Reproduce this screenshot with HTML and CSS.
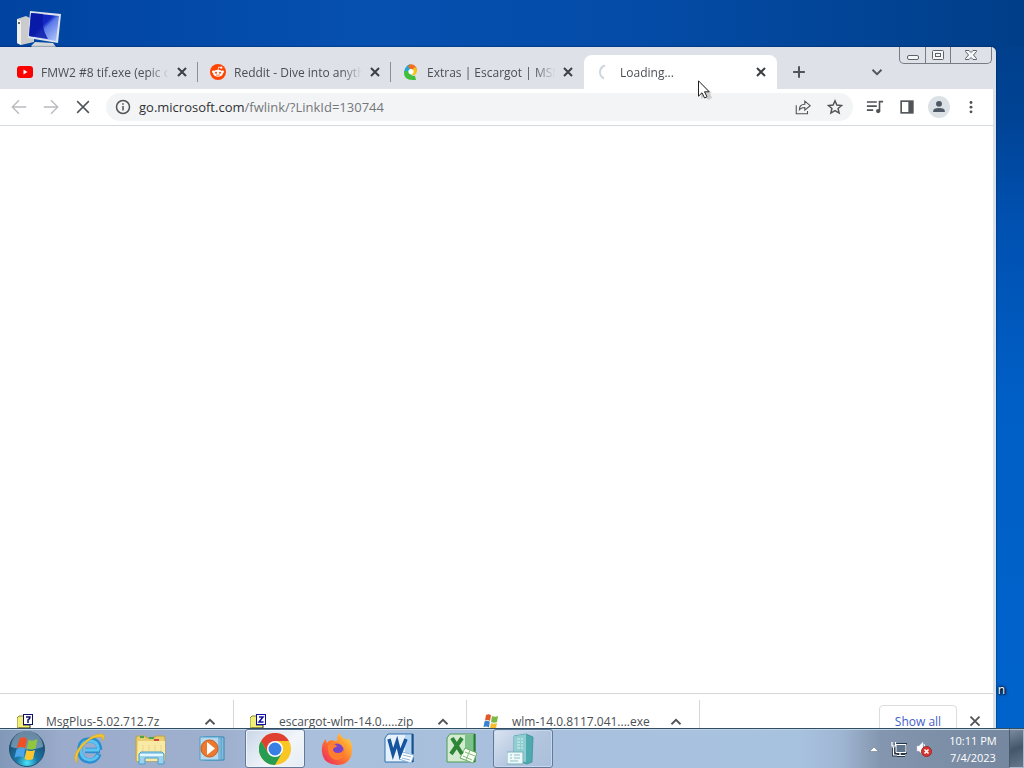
FILE: index.html
```html
<!DOCTYPE html>
<html lang="en">
  <head>
    <meta charset="utf-8">
    <title>Desktop</title>
    <link rel="stylesheet" href="styles.css">
  </head>
  <body>
    <main class="desktop">
      <svg class="computer-icon" viewBox="0 0 46 37" aria-label="Computer">
        <defs>
          <linearGradient id="screen" x1="0" y1="0" x2="1" y2="1">
            <stop offset="0" stop-color="#0a1fae"/>
            <stop offset=".45" stop-color="#1428c4"/>
            <stop offset=".55" stop-color="#5d7bea"/>
            <stop offset="1" stop-color="#b9cdfa"/>
          </linearGradient>
        </defs>
        <path d="M1 8l9-3 8 4v22l-13 3-4-2z" fill="#c9cbcd"/>
        <path d="M1 8l4 2v24l-4-2z" fill="#eeeeec"/>
        <circle cx="3" cy="12" r="1" fill="#333"/>
        <path d="M19 31l18 1 3 4-6 1H17l-2-2z" fill="#d5d9dc"/>
        <path d="M14 0l31 3-3 29-30-5z" fill="#dce4ee"/>
        <path d="M15 2l28 3-3 25-27-5z" fill="url(#screen)"/>
        <path d="M15 2l12 1q-2 14 5 25l-19-3z" fill="#0718a4" opacity=".8"/>
      </svg>
      <span class="icon-label">n</span>

      <section class="window">
        <header class="tabstrip">
          <div class="tab">
            <svg class="favicon" viewBox="0 0 16 16"><rect x="0" y="2" width="16" height="12" rx="3" fill="#f00"/><path d="M6.500 5.500v5l4-2.500z" fill="#fff"/></svg>
            <span class="tab-title">FMW2 #8 tif.exe (epic de</span>
            <button class="tab-close" aria-label="Close tab"><svg viewBox="0 0 16 16"><path d="M4 4l8 8M12 4l-8 8"/></svg></button>
          </div>
          <div class="tab">
            <svg class="favicon" viewBox="0 0 16 16"><circle cx="8" cy="8" r="8" fill="#ff4500"/><ellipse cx="8" cy="9.300" rx="5" ry="3.500" fill="#fff"/><circle cx="3.300" cy="7.800" r="1.300" fill="#fff"/><circle cx="12.700" cy="7.800" r="1.300" fill="#fff"/><circle cx="11.300" cy="3.700" r="1.100" fill="#fff"/><path d="M8 6l.7-3 2.600.7" stroke="#fff" fill="none" stroke-width=".7"/><circle cx="6" cy="8.700" r="1" fill="#ff4500"/><circle cx="10" cy="8.700" r="1" fill="#ff4500"/><path d="M6 10.800q2 1.200 4 0" stroke="#ff4500" fill="none" stroke-width=".7"/></svg>
            <span class="tab-title">Reddit - Dive into anyth</span>
            <button class="tab-close" aria-label="Close tab"><svg viewBox="0 0 16 16"><path d="M4 4l8 8M12 4l-8 8"/></svg></button>
          </div>
          <div class="tab">
            <svg class="favicon" viewBox="0 0 16 16"><path d="M7 0Q2 2 1 8l5 1q-1-3 2-4z" fill="#25a7d8"/><path d="M5 2q2-3 6-1 3 2 3 6l-3 2-1-3-3-1z" fill="#f36c21"/><path d="M14 6q0 6-5 5l1-3V5l2-2z" fill="#f6c514"/><path d="M1 7q-1 9 9 9h3l-1-4q-5 0-7-5z" fill="#3fbf3a"/><circle cx="8" cy="7.500" r="2.600" fill="#fff"/></svg>
            <span class="tab-title">Extras | Escargot | MSN M</span>
            <button class="tab-close" aria-label="Close tab"><svg viewBox="0 0 16 16"><path d="M4 4l8 8M12 4l-8 8"/></svg></button>
          </div>
          <div class="tab active">
            <svg class="favicon" viewBox="0 0 16 16"><path d="M9 1.500A7 7 0 0 0 8 14.500" fill="none" stroke="#cdd5df" stroke-width="2"/></svg>
            <span class="tab-title">Loading...</span>
            <button class="tab-close" aria-label="Close tab"><svg viewBox="0 0 16 16"><path d="M4 4l8 8M12 4l-8 8"/></svg></button>
          </div>
          <button class="icon-button new-tab" aria-label="New tab"><svg viewBox="0 0 20 20"><path d="M10 3.500v13M3.500 10h13" stroke-width="2.200"/></svg></button>
          <button class="icon-button tab-search" aria-label="Search tabs"><svg viewBox="0 0 20 20"><path d="M5 7.500l5 5 5-5" stroke-width="2"/></svg></button>
          <div class="window-controls">
            <button aria-label="Minimize"><svg viewBox="0 0 24 16"><rect x="6.500" y="8.500" width="11" height="4" rx="1.500"/></svg></button>
            <button aria-label="Maximize"><svg viewBox="0 0 24 16"><rect x="6.500" y="3.500" width="11" height="9" rx="1"/><rect x="9.500" y="6.500" width="5" height="3"/></svg></button>
            <button class="close-window" aria-label="Close"><svg viewBox="0 0 24 16"><path d="M6.500 3.500h3.500L12 5.500l2-2h3.500v1L14.500 8l3 3.500v1H14l-2-2-2 2H6.500v-1l3-3.500-3-3.500z"/></svg></button>
          </div>
        </header>

        <nav class="toolbar">
          <button class="icon-button disabled" aria-label="Back"><svg viewBox="0 0 20 20"><path d="M18 10H3M10 2.500L2.500 10l7.500 7.500"/></svg></button>
          <button class="icon-button disabled" aria-label="Forward"><svg viewBox="0 0 20 20"><path d="M2 10h15M10 2.500l7.500 7.500-7.500 7.500"/></svg></button>
          <button class="icon-button" aria-label="Stop"><svg viewBox="0 0 20 20"><path d="M3.500 3.500l13 13M16.500 3.500l-13 13" stroke-width="1.700"/></svg></button>
          <div class="omnibox">
            <svg class="info" viewBox="0 0 16 16"><circle cx="8" cy="8" r="6.500"/><path d="M8 7v4.500M8 4.300v1.500"/></svg>
            <a class="address" href="#"><span class="domain">go.microsoft.com</span>/fwlink/?LinkId=130744</a>
            <button class="icon-button" aria-label="Share"><svg viewBox="0 0 20 20"><path d="M2.500 8v9.500h12.500v-3M6 13q0-6 6-6V3.500l6 5-6 5v-3q-4 0-6 2.500z" stroke-width="1.200"/></svg></button>
            <button class="icon-button" aria-label="Bookmark"><svg viewBox="0 0 20 20"><path d="M10 3l2.100 4.800 5.200.5-3.900 3.400 1.200 5.100-4.600-2.700-4.600 2.700 1.200-5.100L2.700 8.300l5.200-.5z" stroke-width="1.600"/></svg></button>
          </div>
          <button class="icon-button" aria-label="Media"><svg viewBox="0 0 20 20"><path d="M1 4.500h11M1 9h11M1 13.500h7M15 15V4h4" stroke-width="1.800"/><circle cx="13.500" cy="14.500" r="2.400" fill="#505357" stroke="none"/></svg></button>
          <button class="icon-button" aria-label="Side panel"><svg viewBox="0 0 20 20"><rect x="3.500" y="3.500" width="13" height="13" stroke-width="1.800"/><path d="M11.500 3.500h5v13h-5z" fill="#505357" stroke="none"/></svg></button>
          <button class="icon-button profile" aria-label="Profile"><svg viewBox="0 0 20 20"><g fill="#4d5966" stroke="none"><circle cx="10" cy="6.500" r="3.300"/><path d="M3.500 15.500v-1q0-3.500 6.500-3.500t6.500 3.500v1z"/></g></svg></button>
          <button class="icon-button" aria-label="Menu"><svg viewBox="0 0 20 20"><g fill="#505357" stroke="none"><circle cx="10" cy="5" r="1.600"/><circle cx="10" cy="10.200" r="1.600"/><circle cx="10" cy="15.400" r="1.600"/></g></svg></button>
        </nav>

        <div class="page"></div>

        <footer class="downloads">
          <div class="download">
            <svg class="file-icon" viewBox="0 0 16 16"><path d="M0 4l2-2h5v12H0z" fill="#f2ee7a" stroke="#8a8530"/><path d="M2 14h11v-3H6" fill="#f7f36b" stroke="#333"/><rect x="6.500" y=".5" width="9" height="10" fill="#fff" stroke="#101060"/><path d="M9 3h4q0 2-2 3v3" fill="none" stroke="#101070" stroke-width="1.500"/></svg>
            <span class="file-name">MsgPlus-5.02.712.7z</span>
            <button class="icon-button" aria-label="Options"><svg viewBox="0 0 20 20"><path d="M5 12.500l5-5 5 5" stroke-width="2"/></svg></button>
          </div>
          <div class="download">
            <svg class="file-icon" viewBox="0 0 16 16"><path d="M0 4l2-2h5v12H0z" fill="#f2ee7a" stroke="#8a8530"/><path d="M2 14h11v-3H6" fill="#f7f36b" stroke="#333"/><rect x="6.500" y=".5" width="9" height="10" fill="#fff" stroke="#1010a0"/><path d="M9 3h4L9 8h4.500" fill="none" stroke="#1010a0" stroke-width="1.500"/></svg>
            <span class="file-name">escargot-wlm-14.0.....zip</span>
            <button class="icon-button" aria-label="Options"><svg viewBox="0 0 20 20"><path d="M5 12.500l5-5 5 5" stroke-width="2"/></svg></button>
          </div>
          <div class="download">
            <svg class="file-icon" viewBox="0 0 16 16"><path d="M3 1q3-1.500 5 .3L7 7Q5 5.500 2 6.500z" fill="#e2582a"/><path d="M9 2q3 1.500 6 0l-1 6q-3 1.500-6 0z" fill="#78b843"/><path d="M1.500 7.500q3-1.500 5.300.3L6 13.500Q3.500 12 .5 13z" fill="#3b82d0"/><path d="M8 9q3 1.500 6 0l-1 5.500q-3 1.500-6 0z" fill="#f5bd2d"/></svg>
            <span class="file-name">wlm-14.0.8117.041....exe</span>
            <button class="icon-button" aria-label="Options"><svg viewBox="0 0 20 20"><path d="M5 12.500l5-5 5 5" stroke-width="2"/></svg></button>
          </div>
          <button class="show-all">Show all</button>
          <button class="icon-button" aria-label="Close downloads"><svg viewBox="0 0 20 20"><path d="M5 4l10 10M15 4L5 14" stroke-width="2"/></svg></button>
        </footer>
      </section>

      <svg class="cursor" viewBox="0 0 14 20"><path d="M3 3v16l4-3 3 4 4-2-2-5h2z" fill="#888" opacity=".35"/><path d="M.5.800v15.400l3.500-3.400 2.600 5.200 2.400-1.200-2.500-5h4.700z" fill="#fff" stroke="#222"/></svg>
    </main>

    <footer class="taskbar">
      <button class="start" aria-label="Start">
        <svg viewBox="0 0 38 38">
          <defs>
            <radialGradient id="orb" cx=".5" cy=".9" r=".85">
              <stop offset="0" stop-color="#4be4f5"/>
              <stop offset=".35" stop-color="#1b78a8"/>
              <stop offset="1" stop-color="#1c3f63"/>
            </radialGradient>
          </defs>
          <circle cx="19" cy="19" r="17.500" fill="url(#orb)" stroke="#24506d"/>
          <path d="M3 17a16 16 0 0 1 32 0q-16 5-32 0z" fill="#a9c3d4" opacity=".55"/>
          <path d="M12 8q5-2 7 1l-1.500 9q-4-2-9 0z" fill="#ee5126"/>
          <path d="M20.500 10q4 2 9-1l-2 9.500q-4 2-8.500 0z" fill="#8fc63e"/>
          <path d="M8.500 19.500q5-2 8.500 0l-1.500 8q-4-2-9 0z" fill="#4aa6e8"/>
          <path d="M18.500 20q4 2 8.500 0l-2 9q-4 2-8.500 0z" fill="#fdc62e"/>
        </svg>
      </button>
      <button class="task" aria-label="Internet Explorer">
        <svg viewBox="0 0 32 32"><path d="M27 17.500H12M26 21Q23 28 16.500 28 7 27 7 17T17 7q9 0 9.500 10" fill="none" stroke="#2a8ed0" stroke-width="5.500"/><path d="M26 17H12M25 22Q22 27 16.500 27 8 26 8 17T17 8q8 0 8.500 9" fill="none" stroke="#5cc3f2" stroke-width="3"/><path d="M4 30Q-2 24 8 12 20 0 29 1q4 1 1 7 0-5-4-4-8 0-16 9-7 8-6 17z" fill="#f5c62c" stroke="#d7a51c" stroke-width=".5"/></svg>
      </button>
      <button class="task" aria-label="Explorer">
        <svg viewBox="0 0 32 32"><path d="M1 5l1-2h8l2 2 8-1 1-1h8l1 2v23H1z" fill="#e8cd6e" stroke="#c2a13f"/><path d="M3 8h27v20H2z" fill="#f8e9a5"/><path d="M5 4h4M14 5h5" stroke="#49a44a" stroke-width="2"/><path d="M19 7h5" stroke="#d4443b" stroke-width="2"/><path d="M8 12v8M14 12v7M20 12v7M26 12v8" stroke="#eed68a"/><path d="M4 21l2-2h21l2 2v10h-6v-6H10v6H4z" fill="#9bd3ee" stroke="#4b9dca"/><path d="M5 22h23" stroke="#e5f6ff" stroke-width="2"/></svg>
      </button>
      <button class="task" aria-label="Media Player">
        <svg viewBox="0 0 32 32"><path d="M9 4h18v23H9z" fill="#85bde0" stroke="#3685b3"/><path d="M6 4h18v23H6z" fill="#a5d4ee" stroke="#4c94bd"/><path d="M3 4h19v23H3z" fill="#b9d8ec" stroke="#4b9fcb"/><circle cx="12.500" cy="15.500" r="8.500" fill="#ed792e" stroke="#c9591e"/><path d="M10 9v13l8-6.500z" fill="#fff"/></svg>
      </button>
      <button class="task open" aria-label="Chrome">
        <svg viewBox="0 0 32 32"><circle cx="16" cy="16" r="16" fill="#f9c624"/><path d="M16 8L9 20 2.100 8A16 16 0 0 1 29.900 8z" fill="#df4032"/><path d="M2.100 8A16 16 0 0 0 16 32l7-12H9z" fill="#269d50"/><circle cx="16" cy="16" r="8" fill="#fff"/><circle cx="16" cy="16" r="6.500" fill="#377fe5"/></svg>
      </button>
      <button class="task" aria-label="Firefox">
        <svg viewBox="0 0 32 32">
          <defs><linearGradient id="fox" x1="1" y1="0" x2="0" y2="1"><stop offset="0" stop-color="#ffe340"/><stop offset=".5" stop-color="#ff7a2d"/><stop offset="1" stop-color="#eb1d65"/></linearGradient></defs>
          <path d="M18 0q2 4 6 6 3 2 3-1 5 6 4 13Q30 32 16 32 2 31 1 19 0 11 5 6q0 3 1 4 1-2 4-3 4 1 6 1 0-5 2-8z" fill="url(#fox)"/>
          <circle cx="16" cy="17" r="6.500" fill="#7744ca"/><path d="M7 12q5-2 8 0l1 2q-3 0-4 2 0 4 5 4 4 0 5-3 2 1 2 4-3 6-9 6Q6 25 7 12z" fill="#ff7d2f"/>
        </svg>
      </button>
      <button class="task" aria-label="Word">
        <svg viewBox="0 0 32 32"><path d="M5 1h25v28H2V5z" fill="#e7f1fb" stroke="#2c70ad"/><path d="M22 2h7v18h-7z" fill="#b3d3f0"/><path d="M29.500 1v28" stroke="#174f8c" stroke-width="2"/><path d="M19 19l12 3-3 8-12-4z" fill="#fff" stroke="#8bb6df"/><path d="M20 22l8 2M19 25l8 2" stroke="#8fb2d8"/><path d="M6 6l4 15 4-12 3 12 6-15" fill="none" stroke="#17549f" stroke-width="3.500"/></svg>
      </button>
      <button class="task" aria-label="Excel">
        <svg viewBox="0 0 32 32"><path d="M5 1h25v28H2V5z" fill="#d4ebcf" stroke="#4b9956"/><path d="M20 2h9v16h-9z" fill="#7cc08a"/><path d="M29.500 1v28" stroke="#287a39" stroke-width="2"/><path d="M20 15l12 5-4 10-13-5z" fill="#f7fff3" stroke="#6aac67"/><path d="M20 19l10 4M18 23l9 4M25 17l-4 10" stroke="#86bd80"/><path d="M7 5l10 16M17 5L6 21" stroke="#2c8636" stroke-width="4"/></svg>
      </button>
      <button class="task open current" aria-label="Setup">
        <svg viewBox="0 0 32 32"><path d="M7 3l12-2 7 3-1 25-5 2-13-4z" fill="#4eaaaf" stroke="#308c95" stroke-width=".7"/><path d="M7 3l12-2v28L7 26z" fill="#8fcdd0"/><path d="M10 6h6M10 9h6M10 12h6M10 15h6" stroke="#d5f0f0" stroke-dasharray="3 1"/><path d="M0 19h16v12H0z" fill="#eefafa" stroke="#79b1bb"/><path d="M3 22h2M7 22h6M3 25h2M7 25h6M3 28h8" stroke="#8fbdc6"/></svg>
      </button>

      <div class="tray">
        <button aria-label="Show hidden icons"><svg viewBox="0 0 16 16"><path d="M3.500 10.500L8 6l4.500 4.500z" fill="#fff" stroke="#57677b" stroke-width=".5"/></svg></button>
        <button aria-label="Network"><svg viewBox="0 0 16 16"><path d="M5 3.500h10v8H5zM9 12v2M6 14.500h8M2.500 7v7H6" fill="none" stroke="#253545" stroke-width="3"/><path d="M5 3.500h10v8H5z" fill="#61768c" stroke="#fff"/><path d="M9 12v2M6 14.500h8M2.500 6v8H6M1 1v4h3.500V1" fill="none" stroke="#fff" stroke-width="1.200"/></svg></button>
        <button aria-label="Volume"><svg viewBox="0 0 16 16"><path d="M1 5h2l4-4v13l-4-4H1z" fill="#fff" stroke="#ccd" stroke-width=".5"/><path d="M8 3q3 4 0 8" fill="none" stroke="#fff"/><circle cx="10.500" cy="10.500" r="5" fill="#d4352e" stroke="#a82827"/><path d="M8.500 8.500l4 4M12.500 8.500l-4 4" stroke="#fff" stroke-width="1.600"/></svg></button>
      </div>
      <time class="clock" datetime="2023-07-04T22:11">10:11 PM<br>7/4/2023</time>
      <button class="show-desktop" aria-label="Show desktop"></button>
    </footer>
  </body>
</html>
```
FILE: styles.css
```css
* {
  box-sizing: border-box;
}
body {
  margin: 0;
  height: 100vh;
  display: flex;
  flex-direction: column;
  overflow: hidden;
  font-family: "Open Sans", "Noto Sans", sans-serif;
  font-size: 12px;
  color: #4c4f54;
}
button {
  padding: 0;
  border: 0;
  background: none;
  font: inherit;
  color: inherit;
}
svg {
  display: block;
}

/* desktop */
.desktop {
  position: relative;
  flex: 1;
  min-height: 0;
  padding: 47px 28px 0 0;
  overflow: hidden;
  background:
    linear-gradient(90deg, #0043a0, #0650b0 35%, #044ba6 65%, #003e88) top / 100% 47px no-repeat,
    linear-gradient(#003e88, #004293 15%, #0050b0 30%, #005fc6 55%, #0063cc);
}
.computer-icon {
  position: absolute;
  left: 16px;
  top: 11px;
  width: 46px;
  height: 37px;
}
.icon-label {
  position: absolute;
  right: 19px;
  bottom: 30px;
  line-height: 16px;
  color: #fff;
  text-shadow: 0 0 2px #000, 1px 1px 2px #000, 0 0 4px #000;
}
.cursor {
  position: absolute;
  left: 698px;
  top: 80px;
  width: 14px;
  height: 20px;
}

/* browser window, its last rows run under the taskbar */
.window {
  position: relative;
  display: flex;
  flex-direction: column;
  height: calc(100% + 21px);
  background: #fff;
  border-right: 3px solid #d9e2ea;
  border-top-right-radius: 5px;
  box-shadow: 0 0 2px #001c40;
}
.tabstrip {
  display: flex;
  align-items: center;
  height: 42px;
  padding: 8px 1px 0 5px;
  background: #dee1e7;
  border-top-right-radius: 4px;
}
.tab {
  display: flex;
  align-items: center;
  gap: 8px;
  flex: 0 1 193px;
  min-width: 0;
  height: 34px;
  padding: 0 8px 0 12px;
  position: relative;
}
.tab:not(.active)::after {
  content: "";
  position: absolute;
  right: 0;
  top: 7px;
  height: 20px;
  border-right: 1px solid #8b8e94;
}
.tab:nth-child(3)::after {
  display: none;
}
.tab.active {
  background: #fff;
  border-radius: 8px 8px 0 0;
}
.favicon {
  flex: none;
  width: 16px;
  height: 16px;
}
.tab-title {
  flex: 1;
  margin-right: -6px;
  overflow: hidden;
  white-space: nowrap;
  -webkit-mask-image: linear-gradient(90deg, #000 82%, transparent 98%);
  mask-image: linear-gradient(90deg, #000 82%, transparent 98%);
}
.tab-close svg {
  width: 16px;
  height: 16px;
  stroke: #3c4043;
  stroke-width: 2;
}
.icon-button {
  display: flex;
  flex: none;
  align-items: center;
  justify-content: center;
  width: 28px;
  height: 28px;
}
.icon-button svg {
  width: 18px;
  height: 18px;
  fill: none;
  stroke: #505357;
  stroke-width: 1.5;
}
.icon-button.disabled svg {
  stroke: #b9bbbe;
}
.new-tab {
  margin-left: 8px;
}
.tab-search {
  margin-left: auto;
  margin-right: 8px;
}
.window-controls {
  display: flex;
  align-self: flex-start;
  margin-top: -8px;
  height: 17px;
  border: 1px solid #777c83;
  border-top: 0;
  border-radius: 0 0 5px 5px;
}
.window-controls button {
  width: 25px;
}
.window-controls button + button {
  border-left: 1px solid #777c83;
}
.window-controls .close-window {
  width: 41px;
}
.window-controls svg {
  width: 24px;
  height: 16px;
  margin: 0 auto;
  fill: #f5f6f7;
  stroke: #5e6268;
}

/* toolbar */
.toolbar {
  display: flex;
  align-items: center;
  gap: 4px;
  height: 37px;
  padding: 0 8px 0 5px;
  border-bottom: 1px solid #d4dade;
}
.omnibox {
  display: flex;
  flex: 1;
  align-items: center;
  gap: 4px;
  height: 28px;
  margin: 0 4px 0 5px;
  padding: 0 4px 0 9px;
  border-radius: 14px;
  background: #f3f4f5;
}
.info {
  width: 16px;
  height: 16px;
  fill: none;
  stroke: #505357;
  stroke-width: 1.5;
}
.address {
  flex: 1;
  margin-left: 4px;
  font-size: 13px;
  color: #74777b;
  text-decoration: none;
}
.domain {
  color: #303236;
}
.profile::before {
  content: "";
  position: absolute;
  width: 22px;
  height: 22px;
  border-radius: 50%;
  background: #dce1e6;
}
.profile svg {
  position: relative;
}
.page {
  flex: 1;
}

/* downloads */
.downloads {
  display: flex;
  align-items: center;
  height: 56px;
  padding-right: 4px;
  border-top: 1px solid #d4d7da;
}
.download {
  display: flex;
  align-items: center;
  flex: 0 1 234px;
  height: 44px;
  padding: 0 9px 0 17px;
  border-right: 1px solid #d4d7da;
}
.download + .download {
  flex-basis: 233px;
  padding-left: 16px;
}
.file-icon {
  flex: none;
  width: 16px;
  height: 16px;
}
.file-name {
  flex: 1;
  margin-left: 13px;
  white-space: nowrap;
}
.show-all {
  width: 78px;
  height: 34px;
  margin-left: auto;
  margin-right: 4px;
  border: 1px solid #dadce0;
  border-radius: 4px;
  color: #3f5fca;
}

/* taskbar */
.taskbar {
  position: relative;
  display: flex;
  flex: none;
  height: 40px;
  border-top: 1px solid #2f4e62;
  background: linear-gradient(90deg, #8298b8, #9aabcb 6%, #9fb0cf 22%, #a9bfdc 30%, #a7c2df 78%, #a0b7d4 82%, #8496af 86%, #74869d);
  box-shadow: inset 0 1px #c4d6e8;
}
.start {
  width: 54px;
  margin-right: 5px;
}
.start svg {
  width: 38px;
  height: 38px;
  margin: 0 auto;
}
.task {
  display: flex;
  align-items: center;
  justify-content: center;
  width: 60px;
  margin-right: 2px;
}
.task svg {
  width: 32px;
  height: 32px;
}
.task.open {
  border: 1px solid #64799a;
  border-radius: 3px;
  background: linear-gradient(135deg, #c9d6e8, #f2f6fa 60%, #e4ebf3);
  box-shadow: inset 0 0 0 1px #edf4fb;
}
.task.current {
  background: linear-gradient(135deg, #dbe5f2, #b4c6df 50%, #a9bfdb);
  box-shadow: inset 0 0 0 1px #c8d8eb;
}
.tray {
  display: flex;
  align-items: center;
  gap: 9px;
  margin-left: auto;
}
.tray svg {
  width: 16px;
  height: 16px;
}
.clock {
  width: 77px;
  padding: 3px 0 0 5px;
  text-align: center;
  font-size: 11px;
  line-height: 17px;
  color: #fff;
}
.show-desktop {
  width: 15px;
  border: 1px solid #a9b7c8;
  border-left-color: #495a6c;
  background: linear-gradient(160deg, #7a8b9e, #44566a 50%, #66788c);
}
```
